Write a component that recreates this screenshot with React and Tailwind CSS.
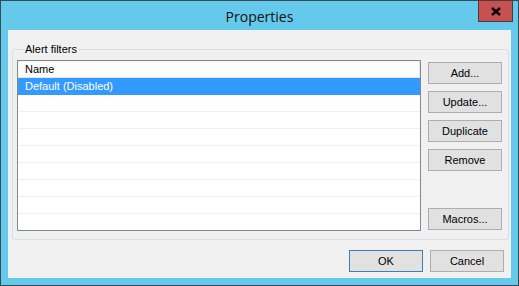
const rows = ["Default (Disabled)", "", "", "", "", "", "", "", ""];

function Btn({ children, primary }) {
  return (
    <button
      className={
        primary
          ? "h-[22px] w-[74px] border border-[#3c7fb1] bg-[#e1e1e1] text-[11px] text-black"
          : "h-[22px] w-[74px] border border-[#adadad] bg-[#e1e1e1] text-[11px] text-black"
      }
    >
      {children}
    </button>
  );
}

export default function App() {
  return (
    <div
      className="flex h-[286px] w-[519px] flex-col border border-[#3a4853] bg-[#64c9ea]"
      style={{ fontFamily: '"Liberation Sans", Arial, sans-serif' }}
    >
      {/* title bar */}
      <div className="relative flex h-[29px] items-center justify-center">
        <span
          className="mt-[1px] text-[14px] text-[#111]"
          style={{ fontFamily: '"Open Sans", "Noto Sans", sans-serif' }}
        >
          Properties
        </span>
        <div className="absolute right-[5px] top-[-1px] flex h-[22px] w-[35px] items-center justify-center border border-[#4e3a3a] bg-[#c75050]">
          <svg width="10" height="9" viewBox="0 0 10 9">
            <path d="M1 1 L9 8 M9 1 L1 8" stroke="#000" strokeWidth="2.4" />
          </svg>
        </div>
      </div>

      {/* content */}
      <div className="mx-[7px] mb-[7px] flex flex-1 flex-col bg-[#f0f0f0] px-[4px] pt-[12px]">
        <fieldset className="flex h-[198px] gap-[7px] rounded-[3px] border border-[#d5dfe5] pb-[8px] pl-[4px] pr-[6px]">
          <legend className="ml-[7px] px-[1px] text-[11px] leading-[14px] text-black">Alert filters</legend>
          <div className="mt-[4px] flex h-[171px] w-[404px] flex-col overflow-hidden border border-[#828790] bg-white text-[11px]">
            <div className="h-[17px] shrink-0 border border-b-[#e5e5e5] border-l-[#f4f4f4] border-r-[#e5e5e5] border-t-[#f4f4f4] bg-[#fcfcfc] pl-[6px] leading-[15px] text-black">
              Name
            </div>
            {rows.map((r, i) => (
              <div
                key={i}
                className={
                  i === 0
                    ? "h-[17px] shrink-0 bg-[#3399ff] pl-[7px] leading-[16px] text-white"
                    : "h-[17px] shrink-0 border-b border-[#f0f0f0] pl-[7px] leading-[16px] text-black"
                }
              >
                {r}
              </div>
            ))}
          </div>
          <div className="flex flex-col gap-[7px] pb-[1px] pt-[6px]">
            <Btn>Add...</Btn>
            <Btn>Update...</Btn>
            <Btn>Duplicate</Btn>
            <Btn>Remove</Btn>
            <div className="mt-auto">
              <Btn>Macros...</Btn>
            </div>
          </div>
        </fieldset>
        <div className="mt-[10px] flex justify-end gap-[7px] pr-[3px]">
          <Btn primary>OK</Btn>
          <Btn>Cancel</Btn>
        </div>
      </div>
    </div>
  );
}
